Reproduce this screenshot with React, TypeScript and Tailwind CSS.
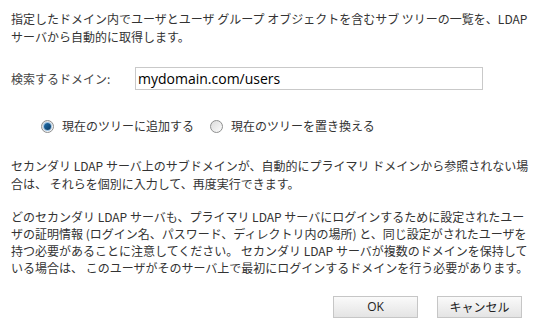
import { useState } from 'react';

const jp = 'font-["Noto_Sans_CJK_JP","Noto_Sans",sans-serif]';

const Radio = ({ checked, onClick }: { checked: boolean; onClick: () => void }) => (
  <span
    onClick={onClick}
    className="relative inline-flex h-[13px] w-[13px] items-center justify-center rounded-full border border-[#8e8f8f] bg-gradient-to-br from-[#dcdcdc] to-[#fbfbfb] cursor-pointer"
  >
    {checked && (
      <span className="h-[7px] w-[7px] rounded-full bg-gradient-to-br from-[#1f6fae] to-[#0c3a62] shadow-[0_0_0_1px_#9cc3e4]" />
    )}
  </span>
);

export default function App() {
  const [mode, setMode] = useState<'add' | 'replace'>('add');
  const [domain, setDomain] = useState('mydomain.com/users');

  return (
    <div className={`h-[334px] w-[543px] bg-white pl-[11px] pr-[12px] pt-[10px] text-[12px] leading-[18px] text-[#333] ${jp}`}>
      {/* Intro */}
      <p className="whitespace-nowrap">
        指定したドメイン内でユーザとユーザ グループ オブジェクトを含むサブ ツリーの一覧を、LDAP
        <br />
        サーバから自動的に取得します。
      </p>

      {/* Domain field */}
      <div className="mt-[21px] flex items-center">
        <label className="w-[124px] text-[#444]">検索するドメイン:</label>
        <input
          value={domain}
          onChange={(e) => setDomain(e.target.value)}
          className='h-[23px] w-[348px] border border-[#c9c9c9] bg-white px-[2px] font-["Open_Sans",sans-serif] text-[14px] text-black outline-none'
        />
      </div>

      {/* Radios */}
      <div className="mt-[27px] flex items-center pl-[30px]">
        <Radio checked={mode === 'add'} onClick={() => setMode('add')} />
        <span className="ml-[8px] mr-[16px]">現在のツリーに追加する</span>
        <Radio checked={mode === 'replace'} onClick={() => setMode('replace')} />
        <span className="ml-[8px]">現在のツリーを置き換える</span>
      </div>

      {/* Notes */}
      <p className="mt-[22px] whitespace-nowrap">
        セカンダリ LDAP サーバ上のサブドメインが、自動的にプライマリ ドメインから参照されない場
        <br />
        合は、 それらを個別に入力して、再度実行できます。
      </p>
      <p className="mt-[15px] whitespace-nowrap leading-[17px]">
        どのセカンダリ LDAP サーバも、プライマリ LDAP サーバにログインするために設定されたユー
        <br />
        ザの証明情報 (ログイン名、パスワード、ディレクトリ内の場所) と、同じ設定がされたユーザを
        <br />
        持つ必要があることに注意してください。 セカンダリ LDAP サーバが複数のドメインを保持して
        <br />
        いる場合は、 このユーザがそのサーバ上で最初にログインするドメインを行う必要があります。
      </p>

      {/* Actions */}
      <div className="mt-[20px] flex justify-end gap-[19px] pr-[9px]">
        <button className='h-[22px] w-[85px] border border-[#c6c6c6] bg-gradient-to-b from-[#fafafa] to-[#e4e4e4] font-["Open_Sans",sans-serif] text-[12px] text-[#222]'>
          OK
        </button>
        <button className="h-[22px] w-[85px] border border-[#c6c6c6] bg-gradient-to-b from-[#fafafa] to-[#e4e4e4] text-[12px] text-[#222]">
          キャンセル
        </button>
      </div>
    </div>
  );
}
